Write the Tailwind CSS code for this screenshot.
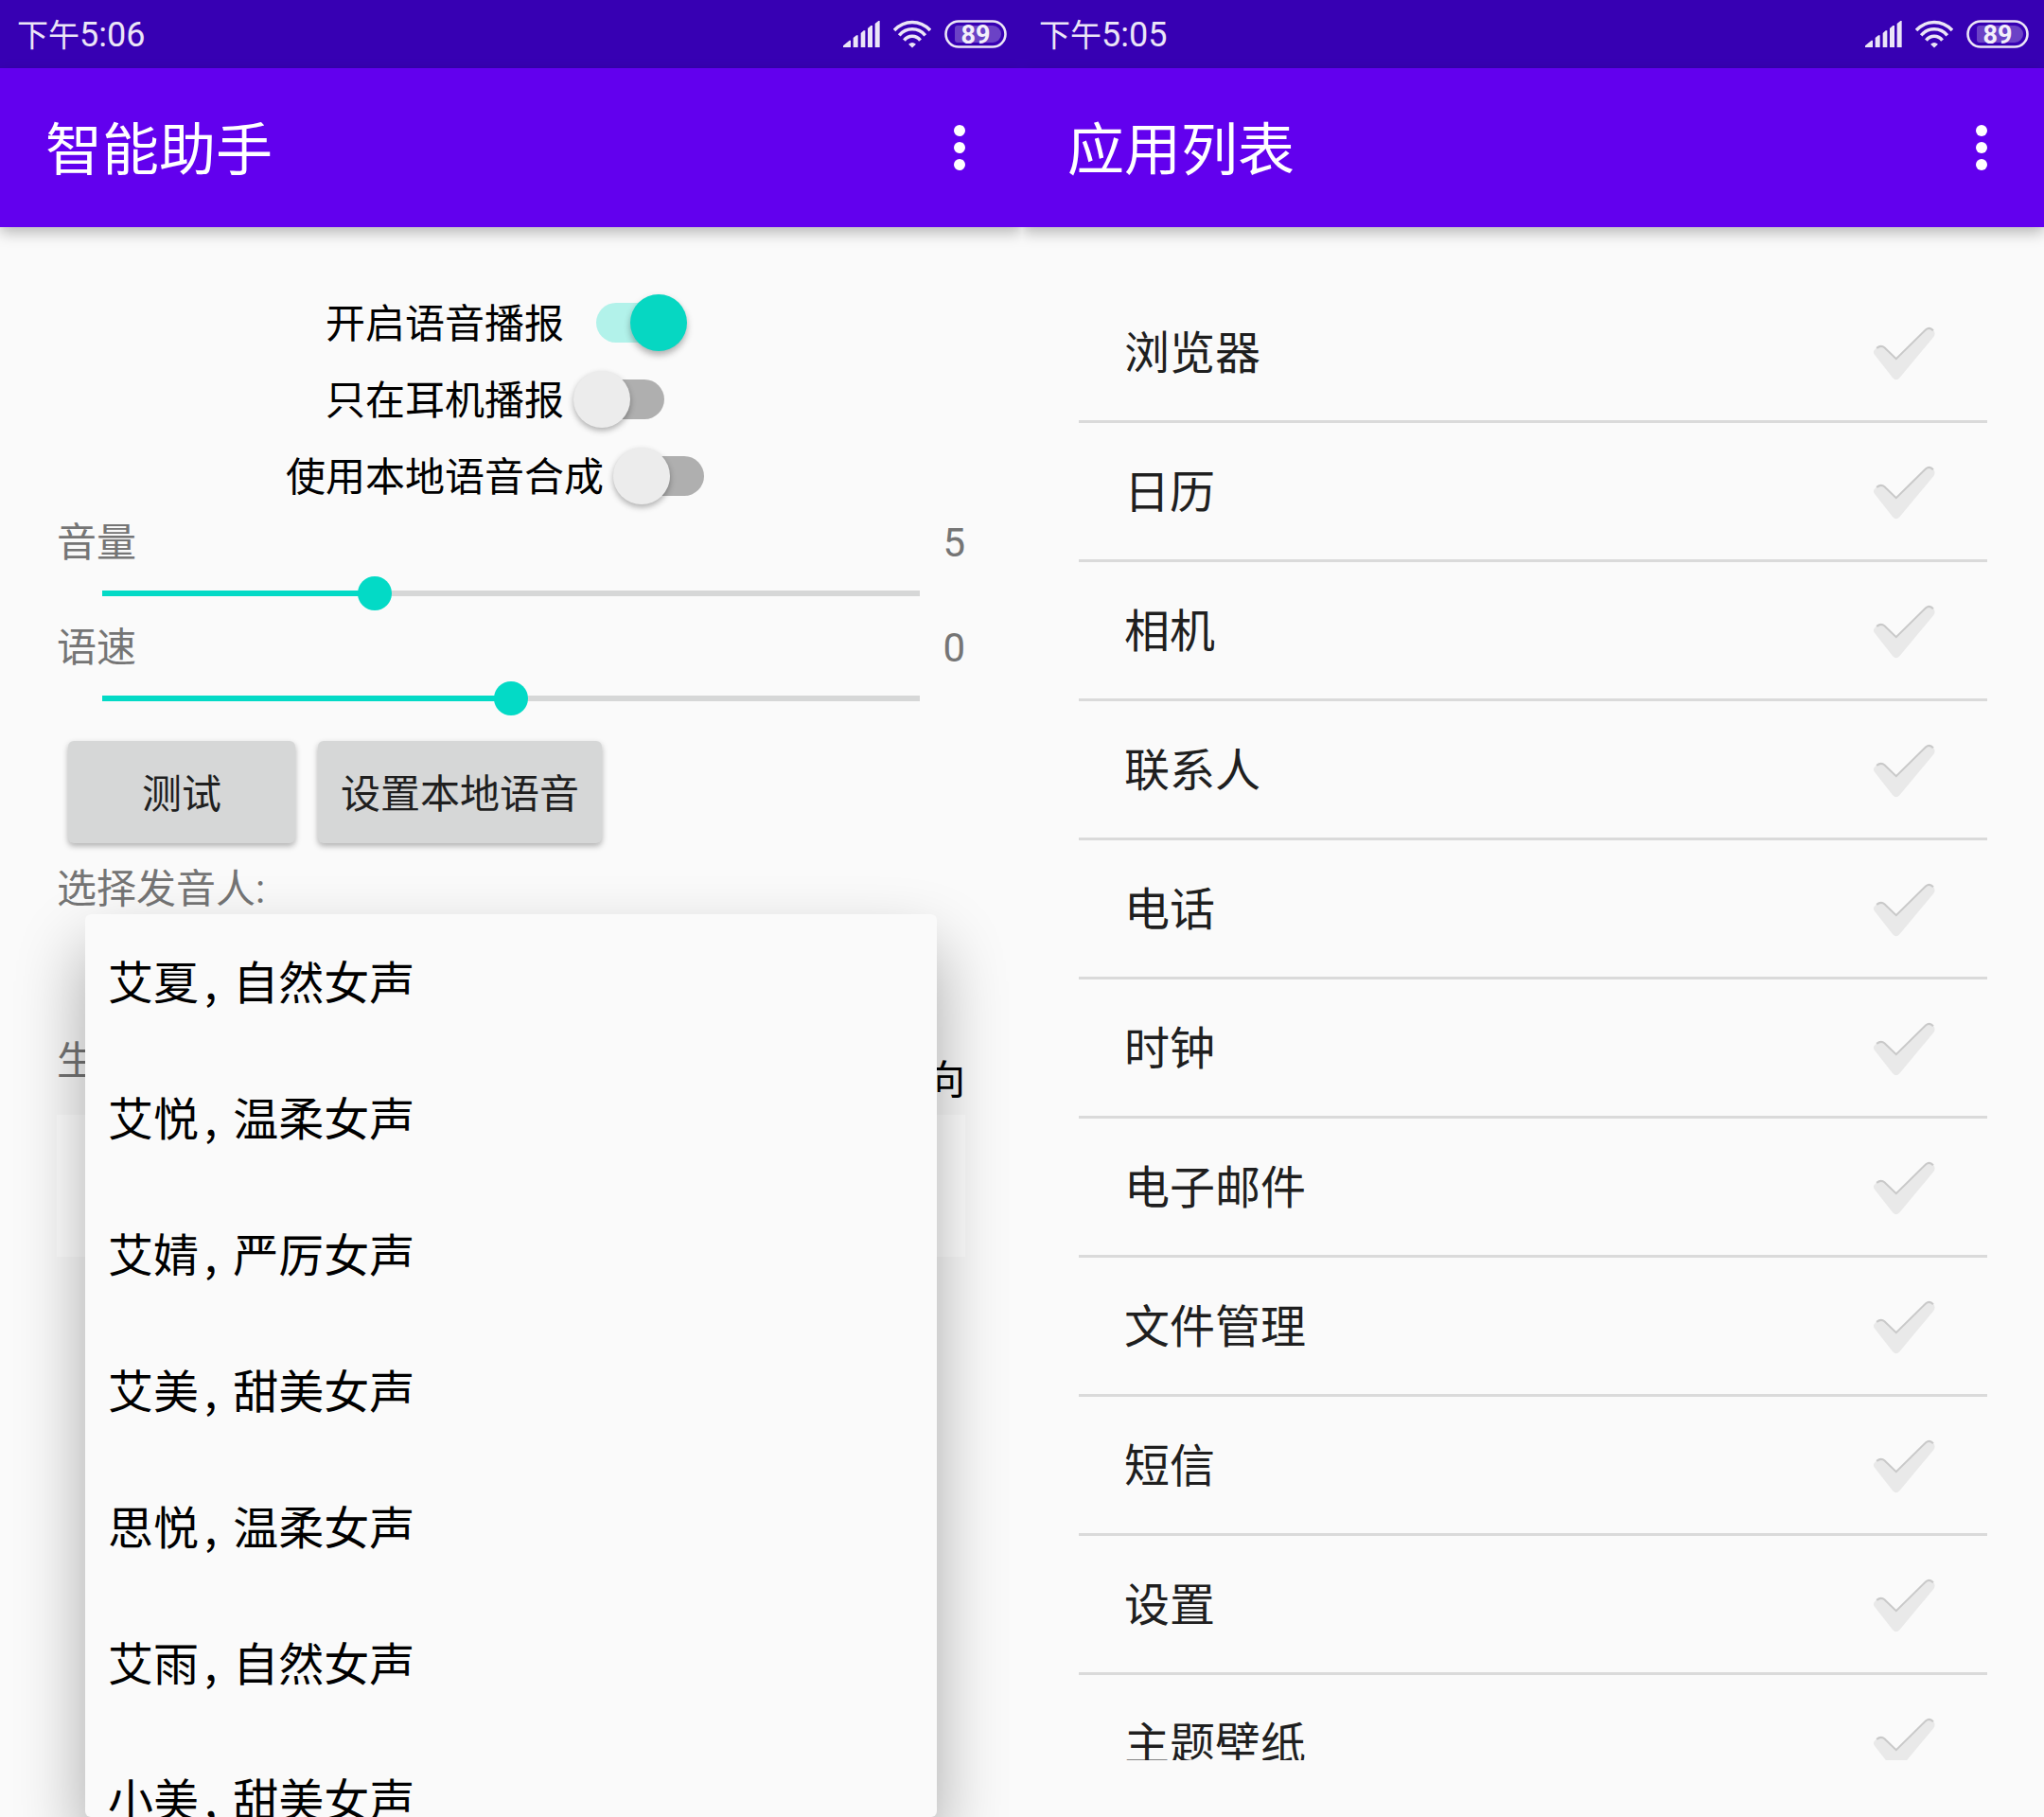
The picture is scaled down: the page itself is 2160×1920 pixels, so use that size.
<!DOCTYPE html>
<html lang="zh-CN">
<head>
<meta charset="utf-8">
<title>智能助手</title>
<script src="https://cdn.jsdelivr.net/npm/@tailwindcss/browser@4"></script>
</head>
<body class="bg-[#fafafa] font-['Roboto','Noto_Sans_CJK_SC',sans-serif] text-[42px] leading-[57px] text-black">
<svg class="hidden" aria-hidden="true">
  <defs>
    <linearGradient id="tick-edge" x1="0" y1="0" x2="0" y2="1">
      <stop offset="0" stop-color="#bdbdbd"/><stop offset="0.6" stop-color="#d2d2d2"/><stop offset="1" stop-color="#e4e4e4"/>
    </linearGradient>
    <symbol id="signal" viewBox="0 0 117 84">
      <path fill="#ebe5f7" d="M0 84v-5l20-17h4v22zM32 84V54l10-8h5v38zM56 84V39l9-8h5v53zM78 84V24l10-9h5v69zM101 84V9l11-9h4v84z"/>
    </symbol>
    <symbol id="wifi" viewBox="0 0 122 88">
      <g fill="none" stroke="#ebe5f7" stroke-width="11">
        <path d="M3 32Q28 6 61 6T119 32"/><path d="M19 48Q36 28 61 28T103 48"/><path d="M35 64Q45 51 61 51T87 64"/>
      </g>
      <path fill="#ebe5f7" d="M49 77Q61 66 73 77L61 88z"/>
    </symbol>
    <symbol id="battery" viewBox="0 0 66 30">
      <rect x="1.500" y="1.500" width="63" height="27" rx="13.500" fill="none" stroke="#ebe5f7" stroke-width="2.600"/>
      <path fill="#6b42c6" d="M14 6h37a9 9 0 0 1 0 18H14q-3 0-3-3V9q0-3 3-3z"/>
      <text x="33" y="25" text-anchor="middle" font-family="Roboto" font-weight="700" font-size="27" fill="#f3effb">89</text>
    </symbol>
    <symbol id="more" viewBox="0 0 12 48">
      <circle cx="6" cy="6" r="6" fill="#fff"/><circle cx="6" cy="24" r="6" fill="#fff"/><circle cx="6" cy="42" r="6" fill="#fff"/>
    </symbol>
    <symbol id="tick" viewBox="0 0 66 56">
      <path d="M2.500 24Q1 26.500 3 29L21.500 52.500Q25 56.500 28.500 52.500L63.500 10.500Q66 6.500 63 3.500Q59.500 0 55.500 3L25 33L13 21.500Q9.500 18.500 6 20.500Z" fill="#e9e9e9" stroke="url(#tick-edge)" stroke-width="1.600" stroke-linejoin="round"/>
      <path d="M5 22Q9.500 18.500 13 21.500L25 33L55.500 3Q59.500 0 63 4" fill="none" stroke="#c9c9c9" stroke-width="2"/>
    </symbol>
  </defs>
</svg>

<div class="grid h-screen grid-cols-2 overflow-hidden">

  <!-- Assistant settings -->
  <section class="relative flex min-w-0 flex-col overflow-hidden">
    <div class="flex h-[72px] shrink-0 items-center justify-between bg-[#3700b3] pr-4 pl-[18px] text-[#ebe5f7]">
      <div class="flex items-baseline pt-0.5 text-[33px] leading-9"><span>下午</span><span class="text-4xl/9">5:06</span></div>
      <div class="flex items-center gap-3.5">
        <svg class="h-7 w-[39px]"><use href="#signal"/></svg>
        <svg class="h-[30px] w-10"><use href="#wifi"/></svg>
        <svg class="h-[30px] w-[66px]"><use href="#battery"/></svg>
      </div>
    </div>
    <header class="flex h-[168px] shrink-0 items-center justify-between bg-[#6200ee] pr-[60px] pl-12 text-white shadow-[0_6px_14px_rgba(0,0,0,0.26)]">
      <h1 class="pt-2 text-[60px] leading-[72px]">智能助手</h1>
      <button type="button" aria-label="更多选项"><svg class="h-12 w-3"><use href="#more"/></svg></button>
    </header>

    <main class="flex flex-col px-[60px] pt-[60px]">
      <label class="flex h-[81px] items-center justify-center gap-2.5">
        <span class="pt-1">开启语音播报</span>
        <input type="checkbox" role="switch" class="peer sr-only" checked>
        <span class="mr-2.5 flex h-[60px] w-[120px] items-center px-6">
          <span class="flex h-[42px] w-[72px] items-center rounded-full bg-[#b2f2ea]"><span class="size-[60px] shrink-0 translate-x-9 rounded-full bg-[#06d7c2] shadow-[0_4px_7px_rgba(0,0,0,0.3)]"></span></span>
        </span>
      </label>
      <label class="flex h-[81px] items-center justify-center gap-2.5">
        <span class="pt-1">只在耳机播报</span>
        <input type="checkbox" role="switch" class="peer sr-only">
        <span class="mr-2.5 flex h-[60px] w-[120px] items-center px-6">
          <span class="flex h-[42px] w-[72px] items-center rounded-full bg-[#afafaf]"><span class="size-[60px] shrink-0 -translate-x-6 rounded-full bg-[#ececec] shadow-[0_3px_6px_rgba(0,0,0,0.3)]"></span></span>
        </span>
      </label>
      <label class="flex h-[81px] items-center justify-center gap-2.5">
        <span class="pt-1">使用本地语音合成</span>
        <input type="checkbox" role="switch" class="peer sr-only">
        <span class="mr-2.5 flex h-[60px] w-[120px] items-center px-6">
          <span class="flex h-[42px] w-[72px] items-center rounded-full bg-[#afafaf]"><span class="size-[60px] shrink-0 -translate-x-6 rounded-full bg-[#ececec] shadow-[0_3px_6px_rgba(0,0,0,0.3)]"></span></span>
        </span>
      </label>

      <div class="flex h-[57px] justify-between pt-0.5 text-[#757575]"><label for="volume">音量</label><output for="volume">5</output></div>
      <div class="grid h-[54px] items-center px-[30px]">
        <div class="mx-[18px] h-1.5 bg-[#d6d7d7] [grid-area:1/1]"><div class="h-full bg-[#03dac6]" style="width:33.33%"></div></div>
        <input id="volume" type="range" min="0" max="15" value="5" class="h-9 w-full appearance-none bg-transparent [grid-area:1/1] [&::-webkit-slider-thumb]:size-9 [&::-webkit-slider-thumb]:appearance-none [&::-webkit-slider-thumb]:rounded-full [&::-webkit-slider-thumb]:bg-[#03dac6]">
      </div>
      <div class="flex h-[57px] justify-between pt-0.5 text-[#757575]"><label for="speed">语速</label><output for="speed">0</output></div>
      <div class="grid h-[54px] items-center px-[30px]">
        <div class="mx-[18px] h-1.5 bg-[#d6d7d7] [grid-area:1/1]"><div class="h-full bg-[#03dac6]" style="width:50%"></div></div>
        <input id="speed" type="range" min="-10" max="10" value="0" class="h-9 w-full appearance-none bg-transparent [grid-area:1/1] [&::-webkit-slider-thumb]:size-9 [&::-webkit-slider-thumb]:appearance-none [&::-webkit-slider-thumb]:rounded-full [&::-webkit-slider-thumb]:bg-[#03dac6]">
      </div>

      <div class="flex gap-6 px-3 py-[18px] text-[#1f1f1f]">
        <button type="button" class="h-[108px] w-60 rounded-md bg-[#d6d7d7] pt-1 shadow-[0_3px_6px_rgba(0,0,0,0.3)]">测试</button>
        <button type="button" class="h-[108px] rounded-md bg-[#d6d7d7] px-6 pt-1 shadow-[0_3px_6px_rgba(0,0,0,0.3)]">设置本地语音</button>
      </div>

      <div id="speaker-label" class="h-[57px] pt-0.5 text-[#757575]">选择发音人:</div>

      <div class="mt-[122px] flex h-[90px] items-end justify-between">
        <label for="output" class="mb-7 text-[#757575]">生</label>
        <span class="mb-2">向</span>
      </div>
      <textarea id="output" class="h-[150px] w-full resize-none bg-white"></textarea>
    </main>

    <!-- Speaker drop-down, open over the form -->
    <ul role="listbox" aria-labelledby="speaker-label" class="absolute inset-x-[90px] top-[966px] bottom-0 overflow-hidden rounded-md bg-[#fafafa] font-['Noto_Sans_CJK_SC',sans-serif] text-5xl/[72px] shadow-[0_36px_72px_rgba(0,0,0,0.33)]">
      <li role="option" class="flex h-36 items-center gap-1.5 px-6 pb-1.5 whitespace-pre"><span>艾夏</span><span>, </span><span>自然女声</span></li>
      <li role="option" class="flex h-36 items-center gap-1.5 px-6 pb-1.5 whitespace-pre"><span>艾悦</span><span>, </span><span>温柔女声</span></li>
      <li role="option" class="flex h-36 items-center gap-1.5 px-6 pb-1.5 whitespace-pre"><span>艾婧</span><span>, </span><span>严厉女声</span></li>
      <li role="option" class="flex h-36 items-center gap-1.5 px-6 pb-1.5 whitespace-pre"><span>艾美</span><span>, </span><span>甜美女声</span></li>
      <li role="option" class="flex h-36 items-center gap-1.5 px-6 pb-1.5 whitespace-pre"><span>思悦</span><span>, </span><span>温柔女声</span></li>
      <li role="option" class="flex h-36 items-center gap-1.5 px-6 pb-1.5 whitespace-pre"><span>艾雨</span><span>, </span><span>自然女声</span></li>
      <li role="option" class="flex h-36 items-center gap-1.5 px-6 pb-1.5 whitespace-pre"><span>小美</span><span>, </span><span>甜美女声</span></li>
    </ul>
  </section>

  <!-- Application list -->
  <section class="flex min-h-0 min-w-0 flex-col overflow-hidden">
    <div class="flex h-[72px] shrink-0 items-center justify-between bg-[#3700b3] pr-4 pl-[18px] text-[#ebe5f7]">
      <div class="flex items-baseline pt-0.5 text-[33px] leading-9"><span>下午</span><span class="text-4xl/9">5:05</span></div>
      <div class="flex items-center gap-3.5">
        <svg class="h-7 w-[39px]"><use href="#signal"/></svg>
        <svg class="h-[30px] w-10"><use href="#wifi"/></svg>
        <svg class="h-[30px] w-[66px]"><use href="#battery"/></svg>
      </div>
    </div>
    <header class="flex h-[168px] shrink-0 items-center justify-between bg-[#6200ee] pr-[60px] pl-12 text-white shadow-[0_6px_14px_rgba(0,0,0,0.26)]">
      <h1 class="pt-2 text-[60px] leading-[72px]">应用列表</h1>
      <button type="button" aria-label="更多选项"><svg class="h-12 w-3"><use href="#more"/></svg></button>
    </header>
    <ul class="m-[60px] min-h-0 flex-1 divide-y-3 divide-[#dadada] overflow-hidden text-5xl/[72px] text-[#1f1f1f]">
      <li><label class="flex h-36 items-center justify-between pt-1 pr-[54px] pl-12"><span>浏览器</span><input type="checkbox" class="sr-only"><svg class="h-[58px] w-[68px]"><use href="#tick"/></svg></label></li>
      <li><label class="flex h-36 items-center justify-between pt-1 pr-[54px] pl-12"><span>日历</span><input type="checkbox" class="sr-only"><svg class="h-[58px] w-[68px]"><use href="#tick"/></svg></label></li>
      <li><label class="flex h-36 items-center justify-between pt-1 pr-[54px] pl-12"><span>相机</span><input type="checkbox" class="sr-only"><svg class="h-[58px] w-[68px]"><use href="#tick"/></svg></label></li>
      <li><label class="flex h-36 items-center justify-between pt-1 pr-[54px] pl-12"><span>联系人</span><input type="checkbox" class="sr-only"><svg class="h-[58px] w-[68px]"><use href="#tick"/></svg></label></li>
      <li><label class="flex h-36 items-center justify-between pt-1 pr-[54px] pl-12"><span>电话</span><input type="checkbox" class="sr-only"><svg class="h-[58px] w-[68px]"><use href="#tick"/></svg></label></li>
      <li><label class="flex h-36 items-center justify-between pt-1 pr-[54px] pl-12"><span>时钟</span><input type="checkbox" class="sr-only"><svg class="h-[58px] w-[68px]"><use href="#tick"/></svg></label></li>
      <li><label class="flex h-36 items-center justify-between pt-1 pr-[54px] pl-12"><span>电子邮件</span><input type="checkbox" class="sr-only"><svg class="h-[58px] w-[68px]"><use href="#tick"/></svg></label></li>
      <li><label class="flex h-36 items-center justify-between pt-1 pr-[54px] pl-12"><span>文件管理</span><input type="checkbox" class="sr-only"><svg class="h-[58px] w-[68px]"><use href="#tick"/></svg></label></li>
      <li><label class="flex h-36 items-center justify-between pt-1 pr-[54px] pl-12"><span>短信</span><input type="checkbox" class="sr-only"><svg class="h-[58px] w-[68px]"><use href="#tick"/></svg></label></li>
      <li><label class="flex h-36 items-center justify-between pt-1 pr-[54px] pl-12"><span>设置</span><input type="checkbox" class="sr-only"><svg class="h-[58px] w-[68px]"><use href="#tick"/></svg></label></li>
      <li><label class="flex h-36 items-center justify-between pt-1 pr-[54px] pl-12"><span>主题壁纸</span><input type="checkbox" class="sr-only"><svg class="h-[58px] w-[68px]"><use href="#tick"/></svg></label></li>
    </ul>
  </section>
</div>
</body>
</html>
